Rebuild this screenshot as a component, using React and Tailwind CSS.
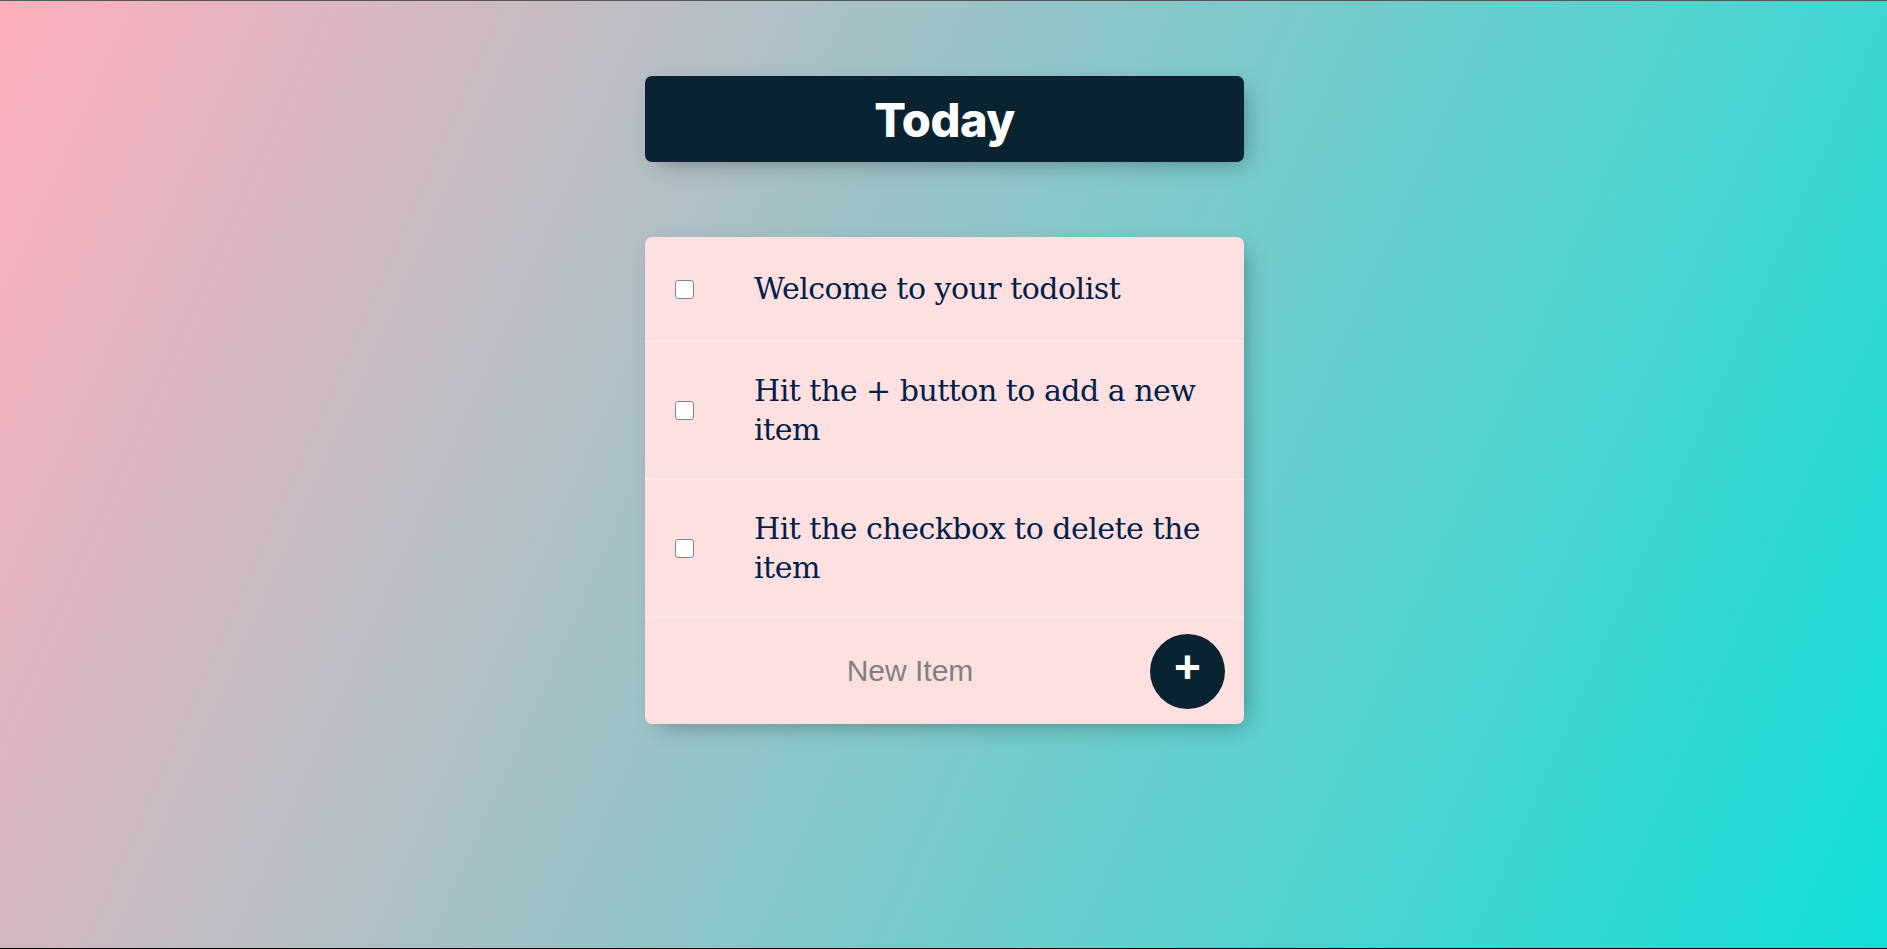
import React from "react";

const items = [
  "Welcome to your todolist",
  "Hit the + button to add a new item",
  "Hit the checkbox to delete the item",
];

export default function App() {
  return (
    <div className="h-[949px] overflow-hidden border-t border-b border-t-[#555555] border-b-black bg-[linear-gradient(114deg,#ffafbd_0%,#12dfd6_100%)] pl-[2px]">
      <div className="mx-auto mt-[75px] flex h-[86px] w-[599px] items-center justify-center rounded-[7px] bg-[#0a2331] shadow-[7px_7px_22px_-7px_rgba(0,0,0,0.35)]">
        <h1 className="font-['Inter',sans-serif] text-[47px] font-extrabold leading-none tracking-[-0.5px] text-white">
          Today
        </h1>
      </div>

      <div className="mx-auto mt-[75px] w-[599px] rounded-[7px] bg-[#fee0e0] shadow-[7px_7px_22px_-7px_rgba(0,0,0,0.35)]">
        {items.map((t) => (
          <div
            key={t}
            className="flex min-h-[105px] items-center border-b border-[#f1f1f1]"
          >
            <input
              type="checkbox"
              className="mx-[30px] h-[19px] w-[19px] shrink-0 appearance-none rounded-[3px] border border-[#858585] bg-white"
            />
            <p className="m-0 p-[30px] font-['DejaVu_Serif',serif] text-[30px] leading-[38.5px] tracking-[-0.5px] text-[#00204a]">
              {t}
            </p>
          </div>
        ))}
        <div className="flex h-[106px] items-center">
          <input
            type="text"
            placeholder="New Item"
            className="ml-[30px] h-[90px] w-[470px] bg-transparent text-center font-['Liberation_Sans',Arial,sans-serif] text-[30px] text-[#333] outline-none placeholder:text-[#808080]"
          />
          <button className="ml-[5px] flex h-[75px] w-[75px] items-center justify-center rounded-full bg-[#0a2331] pb-[9px] font-['Liberation_Sans',Arial,sans-serif] text-[46px] font-bold leading-none text-white">
            +
          </button>
        </div>
      </div>
    </div>
  );
}
